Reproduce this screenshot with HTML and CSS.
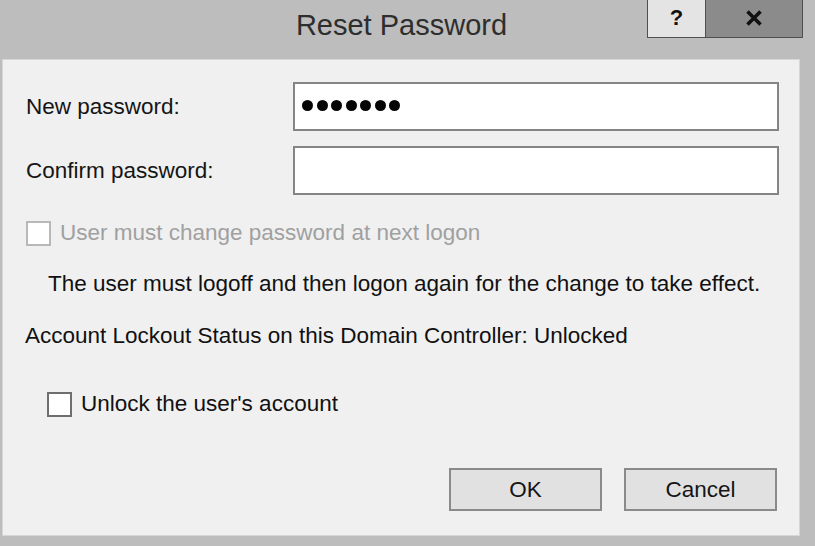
FILE: index.html
```html
<!DOCTYPE html>
<html>
<head>
<meta charset="utf-8">
<link rel="stylesheet" href="styles.css">
</head>
<body>
<div class="window">
  <div class="titlebar">
    <div class="spacer"></div>
    <div class="title">Reset Password</div>
    <div class="caption-buttons">
      <div class="cap-btn help">?</div>
      <div class="cap-btn close">
        <svg width="18" height="16" viewBox="0 0 18 16"><path d="M2.5 1.5 L15.5 14.5 M15.5 1.5 L2.5 14.5" stroke="#111" stroke-width="3.6" stroke-linecap="butt"/></svg>
      </div>
    </div>
  </div>
  <div class="client">
    <div class="fields">
      <div class="label">New password:</div>
      <div class="textbox"><span class="dot"></span><span class="dot"></span><span class="dot"></span><span class="dot"></span><span class="dot"></span><span class="dot"></span><span class="dot"></span></div>
      <div class="label">Confirm password:</div>
      <div class="textbox"></div>
    </div>
    <div class="check disabled first">
      <span class="box"></span>
      <span class="check-label">User must change password at next logon</span>
    </div>
    <div class="info">The user must logoff and then logon again for the change to take effect.</div>
    <div class="lockout">Account Lockout Status on this Domain Controller: Unlocked</div>
    <div class="check second">
      <span class="box"></span>
      <span class="check-label">Unlock the user's account</span>
    </div>
    <div class="buttons">
      <div class="btn">OK</div>
      <div class="btn">Cancel</div>
    </div>
  </div>
</div>
</body>
</html>
```

FILE: styles.css
```css
html, body {
  margin: 0;
  padding: 0;
  background: #bdbdbd;
  width: 815px;
  height: 546px;
  overflow: hidden;
  font-family: "Liberation Sans", Arial, sans-serif;
  color: #111;
}

.window {
  width: 803px;
}

.titlebar {
  height: 59px;
  display: grid;
  grid-template-columns: 1fr auto 1fr;
}

.title {
  font-size: 29px;
  color: #2e2e2e;
  line-height: 50px;
}

.caption-buttons {
  justify-self: end;
  align-self: start;
  display: flex;
  height: 38px;
  border: 1px solid #4f4f4f;
  border-top: none;
  box-sizing: border-box;
}

.cap-btn {
  display: flex;
  align-items: center;
  justify-content: center;
  font-weight: bold;
  font-size: 22px;
  color: #111;
}

.help {
  width: 58px;
  background: #e4e4e4;
  border-right: 1px solid #4f4f4f;
  padding-bottom: 2px;
  box-sizing: border-box;
}

.close {
  width: 96px;
  background: #8b8b8b;
  padding-bottom: 2px;
  box-sizing: border-box;
}

.client {
  margin-left: 2px;
  width: 798px;
  height: 477px;
  box-sizing: border-box;
  background: #f0f0f0;
  border: 1px solid #d6d6d6;
  padding: 22px 20px 0 23px;
  font-size: 22.5px;
}

.fields {
  display: grid;
  grid-template-columns: 267px 486px;
  grid-auto-rows: 49px;
  row-gap: 15px;
  align-items: center;
}

.label {
  color: #151515;
}

.textbox {
  height: 49px;
  box-sizing: border-box;
  background: #fff;
  border: 2px solid #858585;
  display: flex;
  align-items: center;
  gap: 3.5px;
  padding-left: 7px;
  padding-bottom: 3px;
}

.dot {
  width: 11px;
  height: 11px;
  border-radius: 50%;
  background: #050505;
}

.check {
  display: flex;
  align-items: center;
  gap: 9px;
  height: 26px;
}

.check .box {
  width: 25px;
  height: 25px;
  box-sizing: border-box;
  background: #fff;
  border: 2px solid #6e6e6e;
}

.check.first {
  margin-top: 25px;
}

.check.disabled .box {
  border-color: #b8b8b8;
}

.check.disabled .check-label {
  color: #a0a0a0;
}

.info {
  margin-top: 25px;
  margin-left: 22px;
  line-height: 26px;
}

.lockout {
  margin-top: 26px;
  margin-left: -1px;
  line-height: 26px;
}

.check.second {
  margin-top: 42px;
  margin-left: 21px;
}

.buttons {
  margin-top: 51px;
  display: flex;
  justify-content: flex-end;
  gap: 22px;
  padding-right: 2px;
}

.btn {
  width: 153px;
  height: 43px;
  box-sizing: border-box;
  background: #e1e1e1;
  border: 2px solid #8a8a8a;
  display: flex;
  align-items: center;
  justify-content: center;
  color: #151515;
}
```
